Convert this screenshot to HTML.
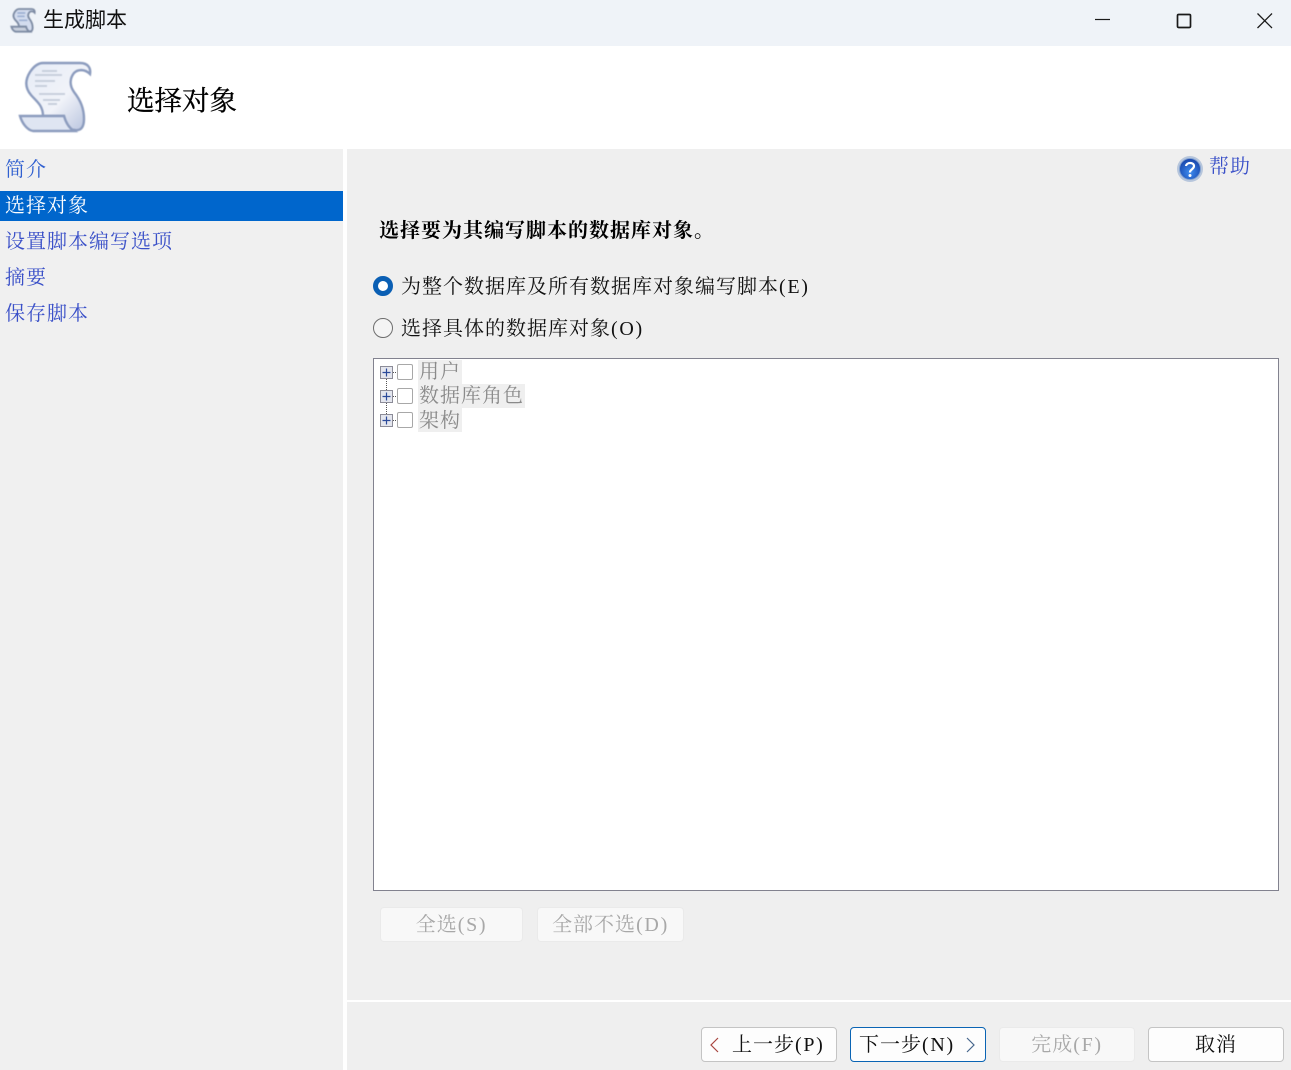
<!DOCTYPE html>
<html lang="zh"><head><meta charset="utf-8"><title>生成脚本</title>
<style>
html,body{margin:0;padding:0;background:#fff}
#r{position:relative;width:1291px;height:1070px;overflow:hidden;background:#efefef;font-family:"Liberation Serif","Noto Serif CJK SC",serif;font-size:20px;color:#111}
#r div,#r svg{position:absolute}
#r span{font-family:"Liberation Serif",serif;font-size:20px;letter-spacing:1.700px}
.t{white-space:nowrap;line-height:30px;height:30px;letter-spacing:1px}
.n{color:#3a50c8;left:5px}
.b{box-sizing:border-box;width:136px;height:35px;background:#fdfdfd;border:1px solid #c4c4c4;border-radius:4px;text-align:center;line-height:33px;padding-top:1px;white-space:nowrap;letter-spacing:1px}
.d{background:#f8f8f8;border-color:#eaeaea;color:#a8a8a8}
.h{background:#efefef;height:24px;line-height:24px;color:#8a8a8a;letter-spacing:1px;white-space:nowrap;padding:0 1px;left:44px}
.c{left:23px;width:14px;height:14px;border:1px solid #a8a8a8;border-radius:2px;background:#fff}
</style></head><body><div id="r">
<div style="left:0;top:0;width:1291px;height:46px;background:#eff3f8"></div>
<div style="left:0;top:46px;width:1291px;height:103px;background:#fff"></div>
<div style="left:0;top:149px;width:343px;height:921px;background:#f0f0f0"></div>
<div style="left:343px;top:149px;width:4px;height:921px;background:#fff"></div>
<div style="left:347px;top:1000px;width:944px;height:2px;background:#fff"></div>

<svg width="0" height="0" style="left:0;top:0"><defs>
<linearGradient id="g" x1="0" y1="0" x2="1" y2="1"><stop offset="0" stop-color="#e6ecf7"/><stop offset=".55" stop-color="#f1f3f9"/><stop offset="1" stop-color="#b4c0dc"/></linearGradient>
<radialGradient id="q" cx=".5" cy=".65" r=".65"><stop offset="0" stop-color="#3f8df0"/><stop offset="1" stop-color="#1642a8"/></radialGradient>
</defs></svg>

<svg style="left:8px;top:6px;filter:blur(.4px)" width="30" height="29" viewBox="0 0 90 85">
<path d="M33 8H70C78 8 81 13 80 19C75 14 68 14 64 18C60 23 59 30 64 37C71 46 74 54 74 64C74 72 71 76 65 75C59 75 56 70 54 61H33C33 50 26 46 21 40C15 33 15 25 20 17C24 11 28 8 33 8Z" fill="#d3dcee" stroke="#7d8ba3" stroke-width="5.500"/>
<path d="M10 61H54C56 68 59 73 64 76H23C17 75 12 68 10 61Z" fill="#c8cfdc" stroke="#7d8ba3" stroke-width="5.500"/>
<path d="M28 20H52M28 30H50M33 42H58" stroke="#9db0d2" stroke-width="5" fill="none"/></svg>
<div class="t" style="left:43px;top:6px;font-family:'Liberation Sans','Noto Sans CJK SC',sans-serif;letter-spacing:0;font-size:21px">生成脚本</div>

<svg style="left:1090px;top:8px" width="190" height="26" viewBox="0 0 190 26" fill="none" stroke="#1a1a1a" stroke-width="1.200">
<path d="M5 11.500H20"/><rect x="87.500" y="6.500" width="13" height="13" rx="1.200" stroke-width="1.700"/><path d="M167.500 5.500L182 20M182 5.500L167.500 20" stroke-width="1.300"/></svg>

<svg style="left:10px;top:55px;filter:blur(.5px)" width="90" height="85" viewBox="0 0 90 85">
<path d="M33 8H70C78 8 81 13 80 19C75 14 68 14 64 18C60 23 59 30 64 37C71 46 74 54 74 64C74 72 71 76 65 75C59 75 56 70 54 61H33C33 50 26 46 21 40C15 33 15 25 20 17C24 11 28 8 33 8Z" fill="url(#g)" stroke="#8c9cbe" stroke-width="2.400"/>
<path d="M10 61H54C56 68 59 73 64 76H23C17 75 12 68 10 61Z" fill="#dfe5f2" stroke="#8c9cbe" stroke-width="2.400"/>
<path d="M32 16H47M25 20H52M25 26H45M25 31H37M29 39H55M33 45H50M38 49H47" stroke="#c3cbd9" stroke-width="1.800" fill="none"/></svg>
<div class="t" style="left:127px;top:86px;font-size:27.500px;letter-spacing:0;color:#000;-webkit-text-stroke:.3px #000">选择对象</div>

<div class="t n" style="top:155px;color:#3060d0">简介</div>
<div style="left:0;top:191px;width:343px;height:30px;background:#0066cc"></div>
<div class="t" style="left:5px;top:191px;color:#fff">选择对象</div>
<div class="t n" style="top:227px">设置脚本编写选项</div>
<div class="t n" style="top:263px">摘要</div>
<div class="t n" style="top:299px">保存脚本</div>

<svg style="left:1176px;top:155px" width="28" height="28" viewBox="0 0 28 28">
<circle cx="14" cy="14" r="13" fill="#b7c6dc"/><circle cx="14" cy="14" r="10.500" fill="url(#q)" stroke="#7f9fd0"/>
<path d="M10 11C10.500 7 18 7 18 11C18 14.500 14 14 14 17.500" fill="none" stroke="#fff" stroke-width="2.200"/><circle cx="14" cy="20.500" r="1.500" fill="#fff"/></svg>
<div class="t" style="left:1209px;top:152px;color:#3a50c8">帮助</div>

<div class="t" style="left:379px;top:216px;font-weight:bold;color:#000">选择要为其编写脚本的数据库对象。</div>

<div style="left:373px;top:276px;width:10px;height:10px;border:5px solid #0a5fb4;border-radius:50%;background:#fff"></div>
<div class="t" style="left:401px;top:272px">为整个数据库及所有数据库对象编写脚本<span>(E)</span></div>
<div style="left:373px;top:318px;width:18px;height:18px;border:1px solid #6e6e6e;border-radius:50%;background:#f4f4f4"></div>
<div class="t" style="left:401px;top:314px">选择具体的数据库对象<span>(O)</span></div>

<div style="left:373px;top:358px;width:904px;height:531px;background:#fff;border:1px solid #82828f">
<svg style="left:5px;top:5px" width="26" height="66" viewBox="0 0 26 66" fill="none">
<path d="M7.500 15V26M7.500 39V50M14 8.500H18M14 32.500H18M14 56.500H18" stroke="#555" stroke-dasharray="1 1"/>
<g id="pl"><rect x="1.500" y="2.500" width="12" height="12" fill="#e4e6ee" stroke="#8c8c98"/><path d="M3.500 8.500H11.500M7.500 4.500V12.500" stroke="#2b4a9a" stroke-width="1.200"/></g>
<use href="#pl" y="24"/><use href="#pl" y="48"/></svg>
<div class="c" style="top:5px"></div><div class="c" style="top:29px"></div><div class="c" style="top:53px"></div>
<div class="h" style="top:1px">用户</div>
<div class="h" style="top:25px;line-height:25px">数据库角色</div>
<div class="h" style="top:49px;line-height:26px">架构</div>
</div>

<div class="b d" style="left:380px;top:907px;width:143px">全选<span>(S)</span></div>
<div class="b d" style="left:537px;top:907px;width:147px">全部不选<span>(D)</span></div>

<div class="b" style="left:701px;top:1027px;padding-left:30px;text-align:left">上一步<span>(P)</span></div>
<svg style="left:708px;top:1036px" width="14" height="18" viewBox="0 0 14 18" fill="none"><path d="M10 2L3 9L10 16" stroke="#a8453f" stroke-width="1.200"/></svg>
<div class="b" style="left:850px;top:1027px;border-color:#0a64b4;padding-left:8px;text-align:left">下一步<span>(N)</span></div>
<svg style="left:963px;top:1036px" width="14" height="18" viewBox="0 0 14 18" fill="none"><path d="M4 2L11 9L4 16" stroke="#46668c" stroke-width="1.200"/></svg>
<div class="b d" style="left:999px;top:1027px">完成<span>(F)</span></div>
<div class="b" style="left:1148px;top:1027px;">取消</div>
</div></body></html>
